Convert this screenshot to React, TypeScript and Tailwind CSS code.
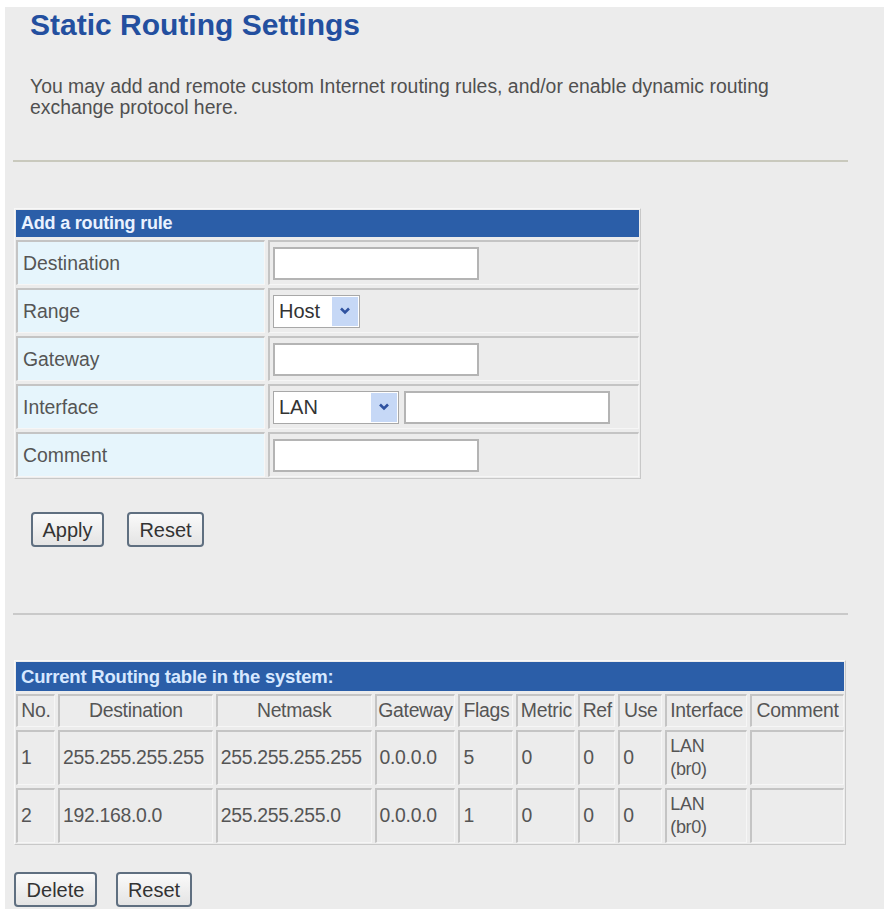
import React from "react";

const font = "font-['Liberation_Sans',Arial,sans-serif]";

function Chevron() {
  return (
    <svg width="12" height="8" viewBox="0 0 12 8">
      <path d="M2 1.5 L6 5.5 L10 1.5" fill="none" stroke="#2f52a0" strokeWidth="2.6" />
    </svg>
  );
}

function Select({ value, width }: { value: string; width: string }) {
  return (
    <div className={`flex h-[33px] ${width} items-stretch border border-[#a8a8a8] bg-white p-[1px]`}>
      <div className="flex flex-1 items-center pl-[4px] text-[20px] text-[#333]">{value}</div>
      <div className="flex w-[26px] items-center justify-center bg-[#c6d8f6]">
        <Chevron />
      </div>
    </div>
  );
}

function TextBox({ width }: { width: string }) {
  return <div className={`h-[33px] ${width} border-2 border-[#b4b4b4] bg-white`} />;
}

function Btn({ label, width }: { label: string; width: string }) {
  return (
    <button
      className={`h-[35px] ${width} rounded-[4px] border-2 border-[#5f6f80] bg-gradient-to-b from-[#fafafa] to-[#e4e4e4] text-[20px] text-[#333]`}
    >
      {label}
    </button>
  );
}

const formRows: { label: string; field: React.ReactNode }[] = [
  { label: "Destination", field: <TextBox width="w-[206px]" /> },
  { label: "Range", field: <Select value="Host" width="w-[87px]" /> },
  { label: "Gateway", field: <TextBox width="w-[206px]" /> },
  {
    label: "Interface",
    field: (
      <div className="flex gap-[5px]">
        <Select value="LAN" width="w-[126px]" />
        <TextBox width="w-[206px]" />
      </div>
    ),
  },
  { label: "Comment", field: <TextBox width="w-[206px]" /> },
];

const cols = [
  { h: "No.", w: "w-[39px]" },
  { h: "Destination", w: "w-[155px]" },
  { h: "Netmask", w: "w-[156px]" },
  { h: "Gateway", w: "w-[81px]" },
  { h: "Flags", w: "w-[55px]" },
  { h: "Metric", w: "w-[59px]" },
  { h: "Ref", w: "w-[37px]" },
  { h: "Use", w: "w-[44px]" },
  { h: "Interface", w: "w-[82px]" },
  { h: "Comment", w: "w-[94px]" },
];

const routes = [
  ["1", "255.255.255.255", "255.255.255.255", "0.0.0.0", "5", "0", "0", "0", "LAN", ""],
  ["2", "192.168.0.0", "255.255.255.0", "0.0.0.0", "1", "0", "0", "0", "LAN", ""],
];

const cell = "border-t-2 border-l-2 border-[#c4c4c4] border-b border-r border-b-[#f6f6f6] border-r-[#f6f6f6]";

export default function App() {
  return (
    <div className={`${font} min-h-[909px] bg-white pl-[5px] pt-[7px]`}>
      <div className="min-h-[902px] bg-[#ececec] pl-[8px] pr-[31px]">
        <h1 className="pl-[17px] pt-[1px] text-[30px] font-bold leading-[34px] text-[#234f9f]">
          Static Routing Settings
        </h1>
        <p className="mt-[34px] pl-[17px] text-[19.4px] leading-[21px] text-[#505050]">
          You may add and remote custom Internet routing rules, and/or enable dynamic routing
          <br />
          exchange protocol here.
        </p>
        <div className="mt-[42px] h-[2px] w-[835px] bg-[#c9c9bd]" />

        <div className="ml-[1px] mt-[46px] w-[627px] border border-t-[#f8f8f8] border-l-[#f8f8f8] border-b-[#c8c8c8] border-r-[#c8c8c8] p-[1px]">
          <div className="h-[27px] bg-[#2b5ea8] pl-[5px] text-[18px] font-bold leading-[27px] tracking-[-0.2px] text-[#eaf2ff]">
            Add a routing rule
          </div>
          <div className="mt-[3px] flex flex-col gap-[3px]">
            {formRows.map((r) => (
              <div key={r.label} className="flex gap-[3px]">
                <div className={`flex h-[45px] w-[249px] items-center bg-[#e6f5fc] pl-[5px] pt-[2px] text-[19.4px] text-[#555] ${cell}`}>
                  {r.label}
                </div>
                <div className={`flex h-[45px] flex-1 items-center bg-[#ececec] pl-[3px] ${cell}`}>{r.field}</div>
              </div>
            ))}
          </div>
        </div>

        <div className="mt-[33px] flex gap-[23px] pl-[18px]">
          <Btn label="Apply" width="w-[73px]" />
          <Btn label="Reset" width="w-[77px]" />
        </div>

        <div className="mt-[66px] h-[2px] w-[835px] bg-[#c9c9c9]" />

        <div className="ml-[1px] mt-[45px] w-[832px] border border-t-[#f8f8f8] border-l-[#f8f8f8] border-b-[#c8c8c8] border-r-[#c8c8c8] p-[1px]">
          <div className="h-[29px] bg-[#2b5ea8] pl-[5px] text-[18.5px] font-bold leading-[29px] tracking-[-0.2px] text-[#d7e8ff]">
            Current Routing table in the system:
          </div>
          <div className="mt-[3px] flex gap-[3px]">
            {cols.map((c) => (
              <div key={c.h} className={`flex h-[33px] ${c.w} items-center justify-center whitespace-nowrap text-[19.4px] tracking-[-0.3px] text-[#555] ${cell}`}>
                {c.h}
              </div>
            ))}
          </div>
          {routes.map((r, ri) => (
            <div key={ri} className="mt-[3px] flex gap-[3px]">
              {r.map((v, i) => (
                <div key={i} className={`flex h-[55px] ${cols[i].w} items-center whitespace-nowrap pl-[3px] text-[19.4px] tracking-[-0.3px] text-[#555] ${cell}`}>
                  {i === 8 ? (
                    <div className="text-[18px] leading-[23px]">
                      LAN
                      <br />
                      (br0)
                    </div>
                  ) : (
                    v
                  )}
                </div>
              ))}
            </div>
          ))}
        </div>

        <div className="mt-[27px] flex gap-[19px] pl-[1px]">
          <Btn label="Delete" width="w-[83px]" />
          <Btn label="Reset" width="w-[76px]" />
        </div>
      </div>
    </div>
  );
}
